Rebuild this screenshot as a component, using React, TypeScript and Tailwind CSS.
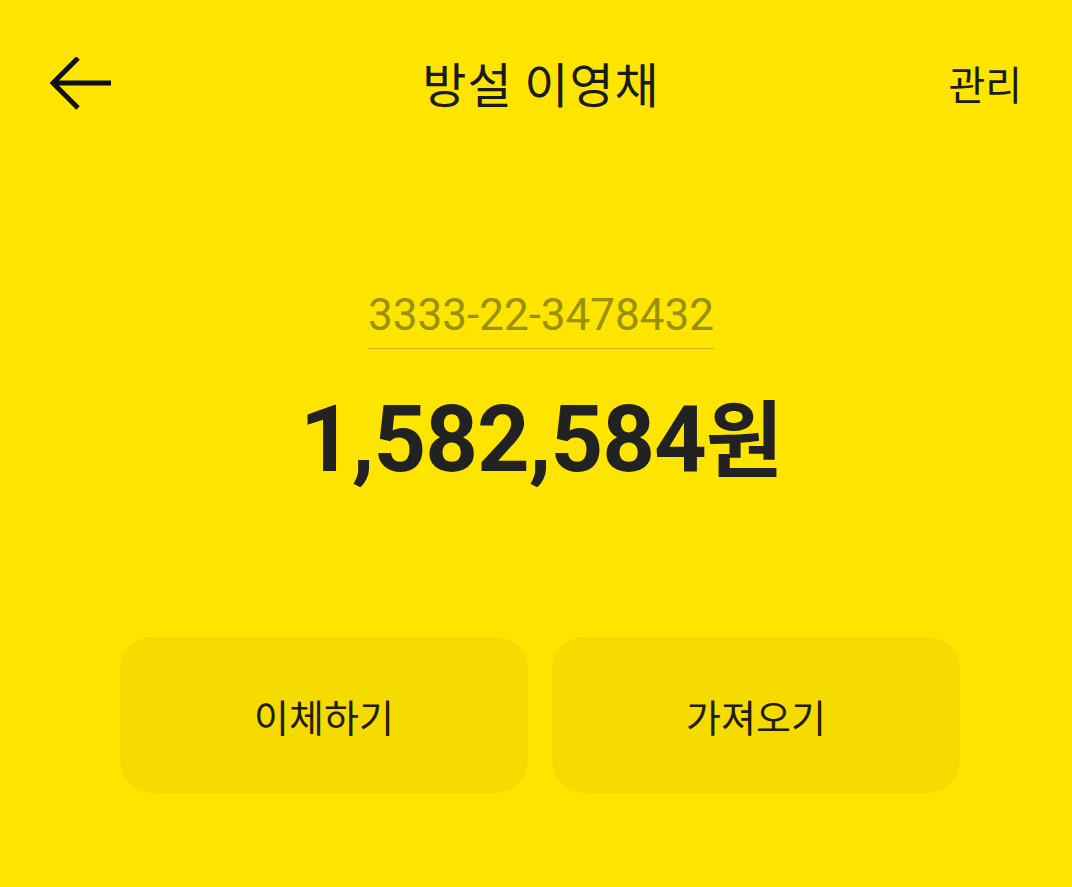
import React from "react";

export default function App() {
  const kr = { fontFamily: '"Noto Sans CJK KR", "Noto Sans", sans-serif' };
  return (
    <div className="w-[1072px] h-[887px] bg-[#FEE500] overflow-hidden text-[#1a1a1a]" style={kr}>
      <div className="relative flex items-center h-[80px] mt-[42px]">
        <svg className="absolute left-[50px] top-[15px]" width="64" height="56" viewBox="0 0 64 56" fill="none">
          <path d="M3 26 H61 M28 1 L3 26 L28 51" stroke="#111" strokeWidth="5" strokeLinecap="butt" strokeLinejoin="miter" />
        </svg>
        <div className="w-[1082px] shrink-0 text-center text-[48px] leading-none font-normal tracking-[1px]">방설 이영채</div>
        <div className="absolute right-[50px] top-[21px] text-[40px] leading-none">관리</div>
      </div>
      <div className="flex flex-col items-center w-[1082px] mt-[171px]">
        <div
          className="text-[44px] leading-none text-[#99900c] pb-[11px] border-b border-[#c9bb1a]"
          style={{ fontFamily: "Roboto, sans-serif" }}
        >
          3333-22-3478432
        </div>
        <div
          className="mt-[44px] text-[92px] leading-none font-bold text-[#222] tracking-[-1px]"
          style={{ fontFamily: 'Roboto, "Noto Sans CJK KR", sans-serif' }}
        >
          1,582,584<span style={kr} className="text-[84px]">원</span>
        </div>
      </div>
      <div className="flex gap-[24px] ml-[120px] w-[840px] mt-[151px]">
        <div className="flex-1 h-[156px] rounded-[32px] bg-[#F5DB00] flex items-center justify-center text-[38px] text-[#221c00]">
          이체하기
        </div>
        <div className="flex-1 h-[156px] rounded-[32px] bg-[#F5DB00] flex items-center justify-center text-[38px] text-[#221c00]">
          가져오기
        </div>
      </div>
    </div>
  );
}
